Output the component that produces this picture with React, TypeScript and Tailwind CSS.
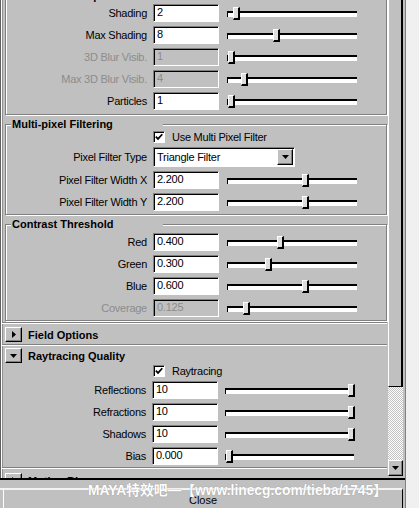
import React from "react";

// Classic 3D borders used all over the render settings panel
const sunken =
  "border border-t-[#808080] border-l-[#808080] border-b-white border-r-white shadow-[inset_1px_1px_0_#000]";
const raised =
  "border border-t-white border-l-white border-b-black border-r-black shadow-[inset_-1px_-1px_0_#808080]";
const etched = "border border-[#808080] shadow-[inset_1px_1px_0_#fff,1px_1px_0_#fff]";

interface RowProps {
  label: string;
  value: string;
  pos: number;
  disabled?: boolean;
  ray?: boolean;
}

function Field({ value, disabled = false, className = "" }: { value: string; disabled?: boolean; className?: string }) {
  return (
    <div
      className={`h-[18px] pl-[3px] leading-[15px] ${sunken} ${
        disabled ? "bg-[#c0c0c0] text-[#8c8c8c]" : "bg-white text-black"
      } ${className}`}
    >
      {value}
    </div>
  );
}

function Slider({ pos, className = "" }: { pos: number; className?: string }) {
  return (
    <div className={`relative h-[13px] ${className}`}>
      <div className="absolute left-0 right-0 top-[4px] h-[6px] border-t-2 border-l border-black bg-white" />
      <div
        className="absolute top-0 h-[13px] w-[7px] border-l border-t border-l-white border-t-white border-r-2 border-b-2 border-r-black border-b-black bg-[#dedede]"
        style={{ left: pos }}
      />
    </div>
  );
}

function Row({ label, value, pos, disabled = false, ray = false }: RowProps) {
  return (
    <div className="flex h-[22px] items-center">
      <div className={`${ray ? "w-[146px]" : "w-[141px]"} text-right ${disabled ? "text-[#8c8c8c]" : ""}`}>{label}</div>
      <Field value={value} disabled={disabled} className="ml-[6px] w-[66px]" />
      <Slider pos={pos} className={ray ? "ml-[7px] w-[129px]" : "ml-[8px] w-[130px]"} />
    </div>
  );
}

function Check({ label, className = "" }: { label: string; className?: string }) {
  return (
    <div className={`flex h-[14px] items-center ${className}`}>
      <div className={`flex h-[12px] w-[12px] items-center justify-center bg-white ${sunken}`}>
        <svg width="8" height="8" viewBox="0 0 8 8">
          <path d="M0.8 3.6 L3 5.9 L7.3 1.2" stroke="#000" strokeWidth="1.7" fill="none" />
        </svg>
      </div>
      <span className="ml-[7px]">{label}</span>
    </div>
  );
}

function Frame({ title, className = "", children }: { title: string; className?: string; children: React.ReactNode }) {
  return (
    <div className={`ml-[5px] mr-[1px] ${etched} ${className}`}>
      <div className="-mt-[8px] ml-[5px] h-[14px] w-[152px] bg-[#c0c0c0] pl-[1px] font-bold leading-[14px] tracking-normal">
        {title}
      </div>
      {children}
    </div>
  );
}

function FoldHeader({ label, open }: { label: string; open: boolean }) {
  return (
    <div className="flex h-[19px] items-center">
      <div className={`ml-[5px] flex h-[15px] w-[17px] items-center justify-center bg-[#c0c0c0] ${raised}`}>
        {open ? (
          <svg width="7" height="4" viewBox="0 0 7 4">
            <path d="M0 0H7L3.5 4Z" fill="#000" />
          </svg>
        ) : (
          <svg width="4" height="7" viewBox="0 0 4 7">
            <path d="M0 0L4 3.5L0 7Z" fill="#000" />
          </svg>
        )}
      </div>
      <span className="ml-[6px] font-bold tracking-normal">{label}</span>
    </div>
  );
}

const Sep = () => <div className="ml-[2px] mr-[1px] h-[2px] border-t border-[#808080] bg-white" />;

export default function App() {
  return (
    <div className="flex h-[508px] w-[419px] overflow-hidden bg-[#c0c0c0] font-['Liberation_Sans',Arial,sans-serif] text-[11px] leading-[14px] tracking-[-0.25px] text-black">
      <div className="flex w-[405px] shrink-0 flex-col">
        {/* scrolling settings area */}
        <div className="flex h-[480px] shrink-0 border-b-2 border-black">
          <div className="h-[478px] w-[388px] shrink-0 overflow-hidden shadow-[inset_1px_0_0_#606060,inset_2px_0_0_#ffffff,inset_3px_0_0_#909090]">
            <div className="-mt-[4px]">
              <Frame title="Number of Samples" className="pb-[2px]">
                <div className="-mt-[1px]">
                  <Row label="Shading" value="2" pos={6} />
                  <Row label="Max Shading" value="8" pos={46} />
                  <Row label="3D Blur Visib." value="1" pos={1} disabled />
                  <Row label="Max 3D Blur Visib." value="4" pos={14} disabled />
                  <Row label="Particles" value="1" pos={1} />
                </div>
              </Frame>

              <Frame title="Multi-pixel Filtering" className="mt-[9px] pb-[1px]">
                <Check label="Use Multi Pixel Filter" className="-mt-[1px] ml-[147px]" />
                <div className="mt-[2px] flex h-[22px] items-center">
                  <div className="w-[141px] text-right">Pixel Filter Type</div>
                  <div className={`ml-[6px] flex h-[20px] w-[142px] items-center bg-white ${sunken}`}>
                    <span className="flex-1 pl-[3px]">Triangle Filter</span>
                    <div className={`mr-[1px] flex h-[16px] w-[16px] items-center justify-center bg-[#c0c0c0] ${raised}`}>
                      <svg width="7" height="4" viewBox="0 0 7 4">
                        <path d="M0 0H7L3.5 4Z" fill="#000" />
                      </svg>
                    </div>
                  </div>
                </div>
                <div className="mt-[1px]">
                  <Row label="Pixel Filter Width X" value="2.200" pos={75} />
                  <Row label="Pixel Filter Width Y" value="2.200" pos={75} />
                </div>
              </Frame>

              <Frame title="Contrast Threshold" className="mt-[9px] pb-[1px]">
                <Row label="Red" value="0.400" pos={50} />
                <Row label="Green" value="0.300" pos={38} />
                <Row label="Blue" value="0.600" pos={75} />
                <Row label="Coverage" value="0.125" pos={16} disabled />
              </Frame>

              <div className="mt-[1px]">
                <Sep />
              </div>
              <div className="pt-[1px]">
                <FoldHeader label="Field Options" open={false} />
              </div>
              <Sep />
              <FoldHeader label="Raytracing Quality" open />
              <Check label="Raytracing" className="-mt-[1px] ml-[153px]" />
              <div className="mt-[1px]">
                <Row label="Reflections" value="10" pos={123} ray />
                <Row label="Refractions" value="10" pos={123} ray />
                <Row label="Shadows" value="10" pos={123} ray />
                <Row label="Bias" value="0.000" pos={1} ray />
              </div>
              <Sep />
              <div className="pt-[2px]">
                <FoldHeader label="Motion Blur" open={false} />
              </div>
            </div>
          </div>

          {/* vertical scrollbar */}
          <div className="flex w-[15px] shrink-0 flex-col">
            <div className="h-[387px] border-l border-l-white border-r-2 border-r-black border-b border-b-black bg-[#c0c0c0]" />
            <div className="h-[73px] bg-[repeating-conic-gradient(#c0c0c0_0%_25%,#ffffff_0%_50%)] [background-size:2px_2px]" />
            <div className={`flex h-[16px] items-center justify-center bg-[#c0c0c0] ${raised}`}>
              <svg width="7" height="4" viewBox="0 0 7 4">
                <path d="M0 0H7L3.5 4Z" fill="#000" />
              </svg>
            </div>
          </div>
          <div className="w-[2px] shrink-0" />
        </div>

        {/* bottom button bar */}
        <div className="relative h-[28px] shrink-0">
          <div className="ml-[3px] mt-[8px] h-[40px] w-[400px] border-t-2 border-l border-t-[#f4f4f4] border-l-white border-r border-r-black pt-[3px] text-center tracking-normal">
            Close
          </div>
          <div className="absolute left-[88px] top-[3px] flex h-[15px] items-center whitespace-nowrap font-['Liberation_Sans','Noto_Sans_CJK_SC',sans-serif] text-[13.8px] font-bold tracking-normal text-white [text-shadow:0_0_1px_#8a8a8a]">
            MAYA特效吧—【www.linecg.com/tieba/1745】
          </div>
          <div className="absolute left-0 top-[8px] h-[2px] w-[3px] bg-[#f4f4f4]" />
        </div>
      </div>

      {/* window edge */}
      <div className="flex-1 border-l border-[#808080] bg-[#f0f0f0]" />
    </div>
  );
}
